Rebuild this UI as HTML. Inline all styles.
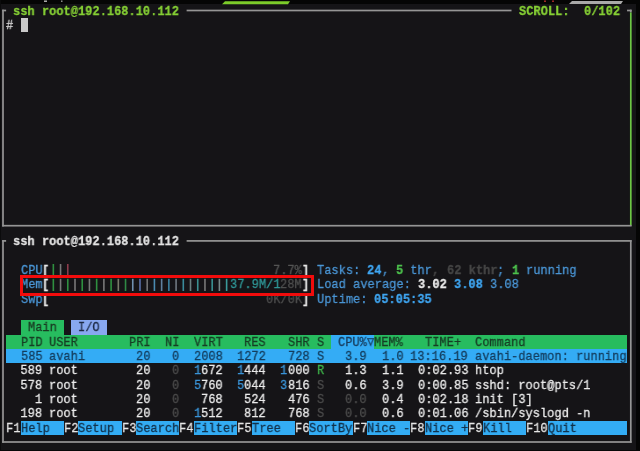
<!DOCTYPE html>
<html><head><meta charset="utf-8"><style>
html,body{margin:0;padding:0;}
body{width:640px;height:451px;overflow:hidden;background:#151417;position:relative;font-family:"Liberation Mono",monospace;font-size:13.6px;}
div{position:absolute;box-sizing:border-box;}
.t{position:absolute;white-space:pre;will-change:transform;-webkit-text-stroke:0.3px currentColor;line-height:14.36px;height:14.36px;transform-origin:0 0;transform:scaleX(0.8847);}
</style></head><body>
<div style="left:0.00px;top:0.00px;width:640.00px;height:4.00px;background:#050505;"></div>
<div style="left:636.30px;top:0.00px;width:4.00px;height:451.00px;background:#050505;"></div>
<div style="left:0.00px;top:0.00px;width:1.20px;height:451.00px;background:#0b0b0c;"></div>
<div style="left:0.00px;top:450.00px;width:640.00px;height:1.00px;background:#080808;"></div>
<svg style="position:absolute;left:0;top:0" width="640" height="6"><polygon points="222,4.2 225,1.2 290,1.2 288,4.2" fill="#7ccc2a"/><polygon points="569,4 572,1 623,1 621,4" fill="#a9a9a9"/><circle cx="545" cy="1.2" r="0.9" fill="#c03030"/><circle cx="553" cy="1.2" r="0.9" fill="#c03030"/><rect x="44" y="0.5" width="3" height="1.4" fill="#bbb"/><rect x="61" y="0.5" width="1.5" height="1.4" fill="#999"/></svg>
<span class="t" style="left:13.34px;top:4.60px;color:#86d035;font-weight:bold;">ssh root@192.168.10.112</span>
<span class="t" style="left:518.74px;top:4.60px;color:#86d035;font-weight:bold;">SCROLL:</span>
<span class="t" style="left:583.72px;top:4.60px;color:#86d035;font-weight:bold;">0/102</span>
<span class="t" style="left:6.12px;top:18.96px;color:#e6e6e6;">#</span>
<div style="left:21.00px;top:18.00px;width:7.00px;height:14.00px;background:#c9c9c9;"></div>
<span class="t" style="left:13.34px;top:235.06px;color:#e4e4e4;font-weight:bold;">ssh root@192.168.10.112</span>
<span class="t" style="left:20.56px;top:263.78px;color:#4a96d6;">CPU</span>
<span class="t" style="left:42.22px;top:263.78px;color:#e8e8e8;font-weight:bold;">[</span>
<span class="t" style="left:273.26px;top:263.78px;color:#555555;">7.7%</span>
<span class="t" style="left:302.14px;top:263.78px;color:#e8e8e8;font-weight:bold;">]</span>
<span class="t" style="left:20.56px;top:278.14px;color:#4a96d6;">Mem</span>
<span class="t" style="left:42.22px;top:278.14px;color:#e8e8e8;font-weight:bold;">[</span>
<span class="t" style="left:229.94px;top:278.14px;color:#2f9696;">37.9M/1</span>
<span class="t" style="left:280.48px;top:278.14px;color:#4e4e4e;">28M</span>
<span class="t" style="left:302.14px;top:278.14px;color:#e8e8e8;font-weight:bold;">]</span>
<span class="t" style="left:20.56px;top:292.50px;color:#4a96d6;">Swp</span>
<span class="t" style="left:42.22px;top:292.50px;color:#e8e8e8;font-weight:bold;">[</span>
<span class="t" style="left:266.04px;top:292.50px;color:#4e4e4e;">0K/0K</span>
<span class="t" style="left:302.14px;top:292.50px;color:#e8e8e8;font-weight:bold;">]</span>
<span class="t" style="left:316.58px;top:263.78px;color:#4a96d6;">Tasks: </span>
<span class="t" style="left:367.12px;top:263.78px;color:#3fa6f2;font-weight:bold;">24</span>
<span class="t" style="left:381.56px;top:263.78px;color:#4a96d6;">, </span>
<span class="t" style="left:396.00px;top:263.78px;color:#4dc24d;font-weight:bold;">5</span>
<span class="t" style="left:403.22px;top:263.78px;color:#4a96d6;"> thr</span>
<span class="t" style="left:432.10px;top:263.78px;color:#464646;font-weight:bold;">,</span>
<span class="t" style="left:446.54px;top:263.78px;color:#464646;font-weight:bold;">62 kthr</span>
<span class="t" style="left:497.08px;top:263.78px;color:#4a96d6;">;</span>
<span class="t" style="left:511.52px;top:263.78px;color:#4dc24d;font-weight:bold;">1</span>
<span class="t" style="left:525.96px;top:263.78px;color:#4a96d6;">running</span>
<span class="t" style="left:316.58px;top:278.14px;color:#4a96d6;">Load average: </span>
<span class="t" style="left:417.66px;top:278.14px;color:#ebebeb;font-weight:bold;">3.02</span>
<span class="t" style="left:453.76px;top:278.14px;color:#3fa6f2;font-weight:bold;">3.08</span>
<span class="t" style="left:489.86px;top:278.14px;color:#4a96d6;">3.08</span>
<span class="t" style="left:316.58px;top:292.50px;color:#4a96d6;">Uptime: </span>
<span class="t" style="left:374.34px;top:292.50px;color:#3fa6f2;font-weight:bold;">05:05:35</span>
<div style="left:19.5px;top:275.1px;width:294.5px;height:21.2px;border:3.2px solid #f20c0c;background:transparent"></div>
<div style="left:20.56px;top:320.42px;width:43.32px;height:14.36px;background:#27bc5f;"></div>
<span class="t" style="left:27.78px;top:321.22px;color:#1a3a22;">Main</span>
<div style="left:71.10px;top:320.42px;width:36.10px;height:14.36px;background:#88a8f0;"></div>
<span class="t" style="left:78.32px;top:321.22px;color:#1c2a44;">I/O</span>
<div style="left:6.12px;top:334.78px;width:620.92px;height:14.36px;background:#27bc5f;"></div>
<div style="left:331.02px;top:334.78px;width:43.32px;height:14.36px;background:#34acf5;"></div>
<span class="t" style="left:20.56px;top:335.58px;color:#173d24;">PID</span>
<span class="t" style="left:49.44px;top:335.58px;color:#173d24;">USER</span>
<span class="t" style="left:128.86px;top:335.58px;color:#173d24;">PRI</span>
<span class="t" style="left:164.96px;top:335.58px;color:#173d24;">NI</span>
<span class="t" style="left:193.84px;top:335.58px;color:#173d24;">VIRT</span>
<span class="t" style="left:244.38px;top:335.58px;color:#173d24;">RES</span>
<span class="t" style="left:287.70px;top:335.58px;color:#173d24;">SHR</span>
<span class="t" style="left:316.58px;top:335.58px;color:#173d24;">S</span>
<span class="t" style="left:338.24px;top:335.58px;color:#173a5a;">CPU%</span>
<span class="t" style="left:367.12px;top:335.58px;color:#173a5a;">▽</span>
<span class="t" style="left:374.34px;top:335.58px;color:#173d24;">MEM%</span>
<span class="t" style="left:424.88px;top:335.58px;color:#173d24;">TIME+</span>
<span class="t" style="left:475.42px;top:335.58px;color:#173d24;">Command</span>
<div style="left:6.12px;top:349.14px;width:620.92px;height:14.36px;background:#34acf5;"></div>
<span class="t" style="left:20.56px;top:349.94px;color:#143d5e;">585</span>
<span class="t" style="left:49.44px;top:349.94px;color:#143d5e;">avahi</span>
<span class="t" style="left:136.08px;top:349.94px;color:#143d5e;">20</span>
<span class="t" style="left:172.18px;top:349.94px;color:#143d5e;">0</span>
<span class="t" style="left:193.84px;top:349.94px;color:#143d5e;">2008</span>
<span class="t" style="left:237.16px;top:349.94px;color:#143d5e;">1272</span>
<span class="t" style="left:287.70px;top:349.94px;color:#143d5e;">728</span>
<span class="t" style="left:316.58px;top:349.94px;color:#143d5e;">S</span>
<span class="t" style="left:345.46px;top:349.94px;color:#143d5e;">3.9</span>
<span class="t" style="left:381.56px;top:349.94px;color:#143d5e;">1.0</span>
<span class="t" style="left:410.44px;top:349.94px;color:#143d5e;">13:16.19</span>
<span class="t" style="left:475.42px;top:349.94px;color:#143d5e;">avahi-daemon: running</span>
<span class="t" style="left:6.12px;top:364.30px;color:#ebebeb;">  589</span>
<span class="t" style="left:49.44px;top:364.30px;color:#ebebeb;">root</span>
<span class="t" style="left:136.08px;top:364.30px;color:#ebebeb;">20</span>
<span class="t" style="left:172.18px;top:364.30px;color:#4c4c4c;">0</span>
<span class="t" style="left:193.84px;top:364.30px;color:#3a94d8;">1</span>
<span class="t" style="left:201.06px;top:364.30px;color:#ebebeb;">672</span>
<span class="t" style="left:237.16px;top:364.30px;color:#3a94d8;">1</span>
<span class="t" style="left:244.38px;top:364.30px;color:#ebebeb;">444</span>
<span class="t" style="left:280.48px;top:364.30px;color:#3a94d8;">1</span>
<span class="t" style="left:287.70px;top:364.30px;color:#ebebeb;">000</span>
<span class="t" style="left:316.58px;top:364.30px;color:#3fb54a;">R</span>
<span class="t" style="left:345.46px;top:364.30px;color:#ebebeb;">1.3</span>
<span class="t" style="left:381.56px;top:364.30px;color:#ebebeb;">1.1</span>
<span class="t" style="left:417.66px;top:364.30px;color:#ebebeb;">0:02.93</span>
<span class="t" style="left:475.42px;top:364.30px;color:#ebebeb;">htop</span>
<span class="t" style="left:6.12px;top:378.66px;color:#ebebeb;">  578</span>
<span class="t" style="left:49.44px;top:378.66px;color:#ebebeb;">root</span>
<span class="t" style="left:136.08px;top:378.66px;color:#ebebeb;">20</span>
<span class="t" style="left:172.18px;top:378.66px;color:#4c4c4c;">0</span>
<span class="t" style="left:193.84px;top:378.66px;color:#3a94d8;">5</span>
<span class="t" style="left:201.06px;top:378.66px;color:#ebebeb;">760</span>
<span class="t" style="left:237.16px;top:378.66px;color:#3a94d8;">5</span>
<span class="t" style="left:244.38px;top:378.66px;color:#ebebeb;">044</span>
<span class="t" style="left:280.48px;top:378.66px;color:#3a94d8;">3</span>
<span class="t" style="left:287.70px;top:378.66px;color:#ebebeb;">816</span>
<span class="t" style="left:316.58px;top:378.66px;color:#4c4c4c;">S</span>
<span class="t" style="left:345.46px;top:378.66px;color:#ebebeb;">0.6</span>
<span class="t" style="left:381.56px;top:378.66px;color:#ebebeb;">3.9</span>
<span class="t" style="left:417.66px;top:378.66px;color:#ebebeb;">0:00.85</span>
<span class="t" style="left:475.42px;top:378.66px;color:#ebebeb;">sshd: root@pts/1</span>
<span class="t" style="left:6.12px;top:393.02px;color:#ebebeb;">    1</span>
<span class="t" style="left:49.44px;top:393.02px;color:#ebebeb;">root</span>
<span class="t" style="left:136.08px;top:393.02px;color:#ebebeb;">20</span>
<span class="t" style="left:172.18px;top:393.02px;color:#4c4c4c;">0</span>
<span class="t" style="left:201.06px;top:393.02px;color:#ebebeb;">768</span>
<span class="t" style="left:244.38px;top:393.02px;color:#ebebeb;">524</span>
<span class="t" style="left:287.70px;top:393.02px;color:#ebebeb;">476</span>
<span class="t" style="left:316.58px;top:393.02px;color:#4c4c4c;">S</span>
<span class="t" style="left:345.46px;top:393.02px;color:#4c4c4c;">0.0</span>
<span class="t" style="left:381.56px;top:393.02px;color:#ebebeb;">0.4</span>
<span class="t" style="left:417.66px;top:393.02px;color:#ebebeb;">0:02.18</span>
<span class="t" style="left:475.42px;top:393.02px;color:#ebebeb;">init [3]</span>
<span class="t" style="left:6.12px;top:407.38px;color:#ebebeb;">  198</span>
<span class="t" style="left:49.44px;top:407.38px;color:#ebebeb;">root</span>
<span class="t" style="left:136.08px;top:407.38px;color:#ebebeb;">20</span>
<span class="t" style="left:172.18px;top:407.38px;color:#4c4c4c;">0</span>
<span class="t" style="left:193.84px;top:407.38px;color:#3a94d8;">1</span>
<span class="t" style="left:201.06px;top:407.38px;color:#ebebeb;">512</span>
<span class="t" style="left:244.38px;top:407.38px;color:#ebebeb;">812</span>
<span class="t" style="left:287.70px;top:407.38px;color:#ebebeb;">768</span>
<span class="t" style="left:316.58px;top:407.38px;color:#4c4c4c;">S</span>
<span class="t" style="left:345.46px;top:407.38px;color:#4c4c4c;">0.0</span>
<span class="t" style="left:381.56px;top:407.38px;color:#ebebeb;">0.6</span>
<span class="t" style="left:417.66px;top:407.38px;color:#ebebeb;">0:01.06</span>
<span class="t" style="left:475.42px;top:407.38px;color:#ebebeb;">/sbin/syslogd -n</span>
<span class="t" style="left:6.12px;top:421.74px;color:#e6e6e6;">F1</span>
<div style="left:20.56px;top:420.94px;width:43.32px;height:14.36px;background:#33acf4;"></div>
<span class="t" style="left:20.56px;top:421.74px;color:#12324c;">Help  </span>
<span class="t" style="left:63.88px;top:421.74px;color:#e6e6e6;">F2</span>
<div style="left:78.32px;top:420.94px;width:43.32px;height:14.36px;background:#33acf4;"></div>
<span class="t" style="left:78.32px;top:421.74px;color:#12324c;">Setup </span>
<span class="t" style="left:121.64px;top:421.74px;color:#e6e6e6;">F3</span>
<div style="left:136.08px;top:420.94px;width:43.32px;height:14.36px;background:#33acf4;"></div>
<span class="t" style="left:136.08px;top:421.74px;color:#12324c;">Search</span>
<span class="t" style="left:179.40px;top:421.74px;color:#e6e6e6;">F4</span>
<div style="left:193.84px;top:420.94px;width:43.32px;height:14.36px;background:#33acf4;"></div>
<span class="t" style="left:193.84px;top:421.74px;color:#12324c;">Filter</span>
<span class="t" style="left:237.16px;top:421.74px;color:#e6e6e6;">F5</span>
<div style="left:251.60px;top:420.94px;width:43.32px;height:14.36px;background:#33acf4;"></div>
<span class="t" style="left:251.60px;top:421.74px;color:#12324c;">Tree  </span>
<span class="t" style="left:294.92px;top:421.74px;color:#e6e6e6;">F6</span>
<div style="left:309.36px;top:420.94px;width:43.32px;height:14.36px;background:#33acf4;"></div>
<span class="t" style="left:309.36px;top:421.74px;color:#12324c;">SortBy</span>
<span class="t" style="left:352.68px;top:421.74px;color:#e6e6e6;">F7</span>
<div style="left:367.12px;top:420.94px;width:43.32px;height:14.36px;background:#33acf4;"></div>
<span class="t" style="left:367.12px;top:421.74px;color:#12324c;">Nice -</span>
<span class="t" style="left:410.44px;top:421.74px;color:#e6e6e6;">F8</span>
<div style="left:424.88px;top:420.94px;width:43.32px;height:14.36px;background:#33acf4;"></div>
<span class="t" style="left:424.88px;top:421.74px;color:#12324c;">Nice +</span>
<span class="t" style="left:468.20px;top:421.74px;color:#e6e6e6;">F9</span>
<div style="left:482.64px;top:420.94px;width:43.32px;height:14.36px;background:#33acf4;"></div>
<span class="t" style="left:482.64px;top:421.74px;color:#12324c;">Kill  </span>
<span class="t" style="left:525.96px;top:421.74px;color:#e6e6e6;">F10</span>
<div style="left:547.62px;top:420.94px;width:79.42px;height:14.36px;background:#33acf4;"></div>
<span class="t" style="left:547.62px;top:421.74px;color:#12324c;">Quit</span>
<svg style="position:absolute;left:0;top:0" width="640" height="451"><rect x="52.54" y="264.0" width="1.6" height="11.0" fill="#2f8f40"/><rect x="59.76" y="264.0" width="1.6" height="11.0" fill="#787878"/><rect x="66.98" y="264.0" width="1.6" height="11.0" fill="#8c3c4c"/><rect x="52.54" y="278.8" width="1.6" height="12.2" fill="#2f8f40"/><rect x="59.76" y="278.8" width="1.6" height="12.2" fill="#787878"/><rect x="66.98" y="278.8" width="1.6" height="12.2" fill="#2f8f40"/><rect x="74.20" y="278.8" width="1.6" height="12.2" fill="#787878"/><rect x="81.42" y="278.8" width="1.6" height="12.2" fill="#2f8f40"/><rect x="88.64" y="278.8" width="1.6" height="12.2" fill="#787878"/><rect x="95.86" y="278.8" width="1.6" height="12.2" fill="#2f8f40"/><rect x="103.08" y="278.8" width="1.6" height="12.2" fill="#787878"/><rect x="110.30" y="278.8" width="1.6" height="12.2" fill="#2f8f40"/><rect x="117.52" y="278.8" width="1.6" height="12.2" fill="#7a7a6a"/><rect x="124.74" y="278.8" width="1.6" height="12.2" fill="#2f8a45"/><rect x="131.96" y="278.8" width="1.6" height="12.2" fill="#7090b0"/><rect x="139.18" y="278.8" width="1.6" height="12.2" fill="#5a70a8"/><rect x="146.40" y="278.8" width="1.6" height="12.2" fill="#727272"/><rect x="153.62" y="278.8" width="1.6" height="12.2" fill="#4a8ab0"/><rect x="160.84" y="278.8" width="1.6" height="12.2" fill="#6080a0"/><rect x="168.06" y="278.8" width="1.6" height="12.2" fill="#3a80a0"/><rect x="175.28" y="278.8" width="1.6" height="12.2" fill="#707880"/><rect x="182.50" y="278.8" width="1.6" height="12.2" fill="#3a8a9a"/><rect x="189.72" y="278.8" width="1.6" height="12.2" fill="#6a8080"/><rect x="196.94" y="278.8" width="1.6" height="12.2" fill="#3a9090"/><rect x="204.16" y="278.8" width="1.6" height="12.2" fill="#777777"/><rect x="211.38" y="278.8" width="1.6" height="12.2" fill="#3a9090"/><rect x="218.60" y="278.8" width="1.6" height="12.2" fill="#778888"/><rect x="225.82" y="278.8" width="1.6" height="12.2" fill="#3a9a9a"/><rect x="2.20" y="9.65" width="3.92" height="1.7" fill="#959595"/><rect x="186.62" y="9.65" width="324.90" height="1.7" fill="#959595"/><rect x="627.04" y="9.65" width="4.56" height="1.7" fill="#959595"/><rect x="2.15" y="9.70" width="1.7" height="216.80" fill="#959595"/><rect x="629.95" y="9.70" width="1.7" height="2.80" fill="#959595"/><rect x="629.95" y="12.50" width="1.7" height="213.20" fill="#6cc644"/><rect x="2.20" y="224.85" width="629.40" height="1.7" fill="#959595"/><rect x="2.20" y="240.05" width="3.92" height="1.7" fill="#959595"/><rect x="186.62" y="240.05" width="444.98" height="1.7" fill="#959595"/><rect x="2.15" y="240.10" width="1.7" height="202.70" fill="#959595"/><rect x="629.95" y="240.10" width="1.7" height="202.70" fill="#959595"/><rect x="2.20" y="441.15" width="629.40" height="1.7" fill="#959595"/></svg>
</body></html>
